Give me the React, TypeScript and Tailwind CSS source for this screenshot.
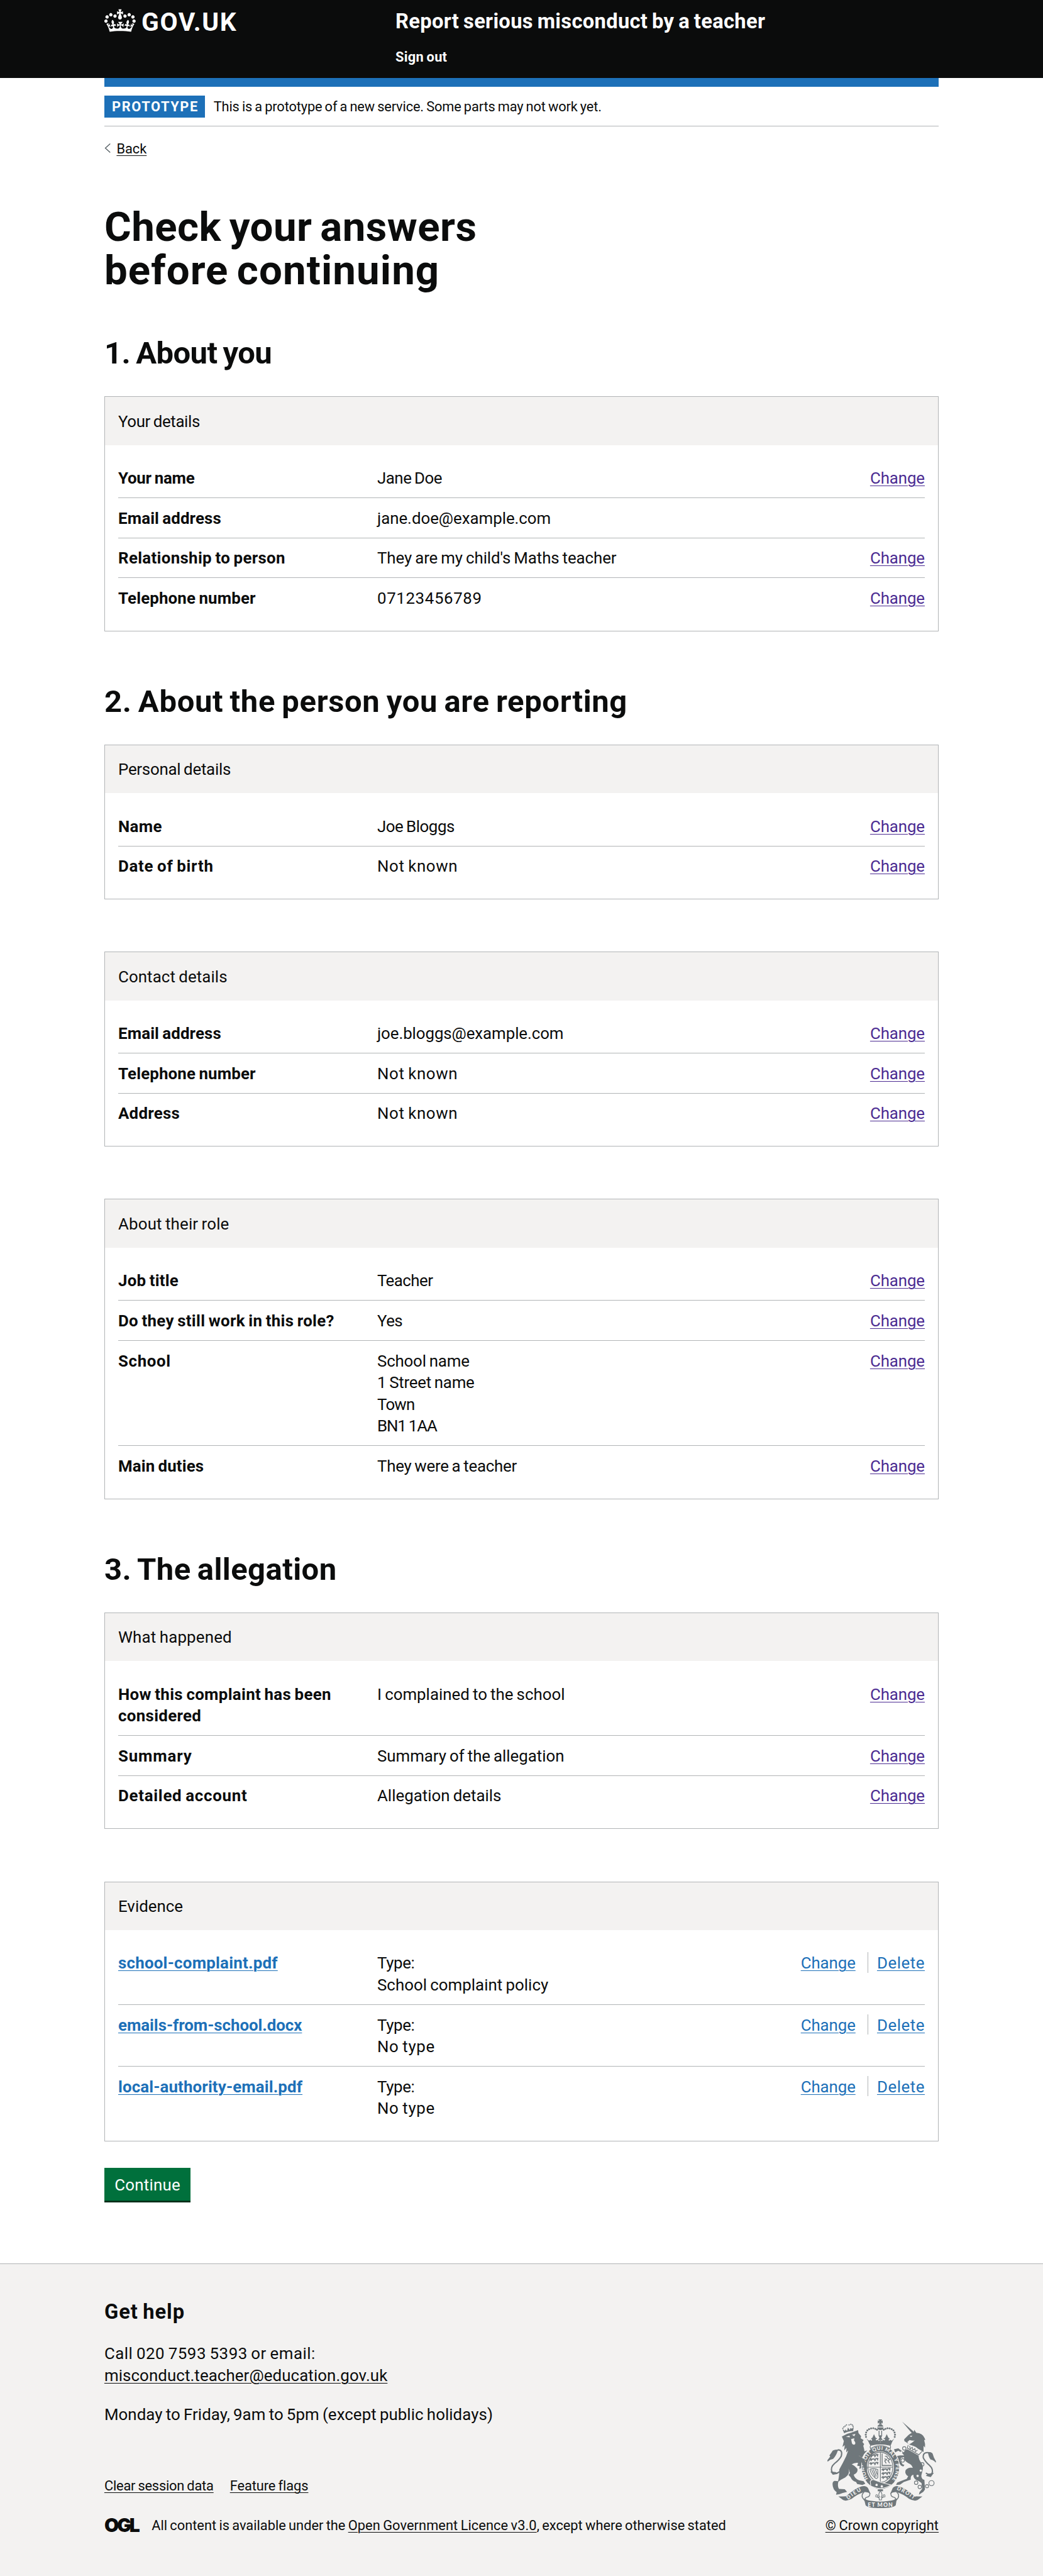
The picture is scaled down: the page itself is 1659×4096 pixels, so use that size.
import type { ReactNode } from "react";

type Tone = "visited" | "link";

type Line = { text: string; className: string };

type Row = {
  label: Line;
  href?: boolean;
  lines: Line[];
  actions: string[];
};

type CardData = { title: Line; tone: Tone; rows: Row[] };

const change = ["Change"];
const changeDelete = ["Change", "Delete"];
const notKnown: Line = { text: "Not known", className: "tracking-[0.0235em]" };
const noType: Line = { text: "No type", className: "tracking-[0.0254em]" };
const type: Line = { text: "Type:", className: "tracking-[-0.0133em]" };
const emailLabel: Line = { text: "Email address", className: "tracking-[0.0045em]" };
const phoneLabel: Line = { text: "Telephone number", className: "tracking-[0.0061em]" };

const yourDetails: CardData = {
  title: { text: "Your details", className: "tracking-[-0.0142em]" },
  tone: "visited",
  rows: [
    { label: { text: "Your name", className: "tracking-[-0.0094em]" }, lines: [{ text: "Jane Doe", className: "tracking-[-0.019em]" }], actions: change },
    { label: emailLabel, lines: [{ text: "jane.doe@example.com", className: "tracking-[-0.0013em]" }], actions: [] },
    {
      label: { text: "Relationship to person", className: "tracking-[0.0126em]" },
      lines: [{ text: "They are my child's Maths teacher", className: "tracking-[-0.0032em]" }],
      actions: change,
    },
    { label: phoneLabel, lines: [{ text: "07123456789", className: "tracking-[0.024em]" }], actions: change },
  ],
};

const personalDetails: CardData = {
  title: { text: "Personal details", className: "tracking-[-0.0101em]" },
  tone: "visited",
  rows: [
    { label: { text: "Name", className: "tracking-[0.0122em]" }, lines: [{ text: "Joe Bloggs", className: "tracking-[-0.0172em]" }], actions: change },
    { label: { text: "Date of birth", className: "tracking-[0.028em]" }, lines: [notKnown], actions: change },
  ],
};

const contactDetails: CardData = {
  title: { text: "Contact details", className: "tracking-[0.0034em]" },
  tone: "visited",
  rows: [
    { label: emailLabel, lines: [{ text: "joe.bloggs@example.com", className: "tracking-[-0.0031em]" }], actions: change },
    { label: phoneLabel, lines: [notKnown], actions: change },
    { label: { text: "Address", className: "tracking-[0.0096em]" }, lines: [notKnown], actions: change },
  ],
};

const roleDetails: CardData = {
  title: { text: "About their role", className: "tracking-[0.0064em]" },
  tone: "visited",
  rows: [
    { label: { text: "Job title", className: "tracking-[0.0092em]" }, lines: [{ text: "Teacher", className: "tracking-[-0.0211em]" }], actions: change },
    {
      label: { text: "Do they still work in this role?", className: "tracking-[0.012em]" },
      lines: [{ text: "Yes", className: "tracking-[-0.02em]" }],
      actions: change,
    },
    {
      label: { text: "School", className: "tracking-[0.0247em]" },
      lines: [
        { text: "School name", className: "tracking-[-0.0073em]" },
        { text: "1 Street name", className: "tracking-[-0.0095em]" },
        { text: "Town", className: "tracking-[-0.03em]" },
        { text: "BN1 1AA", className: "tracking-[-0.0426em]" },
      ],
      actions: change,
    },
    {
      label: { text: "Main duties", className: "tracking-[0.0048em]" },
      lines: [{ text: "They were a teacher", className: "tracking-[-0.0095em]" }],
      actions: change,
    },
  ],
};

const whatHappened: CardData = {
  title: { text: "What happened", className: "tracking-[0.0069em]" },
  tone: "visited",
  rows: [
    {
      label: { text: "How this complaint has been considered", className: "tracking-[0.0125em]" },
      lines: [{ text: "I complained to the school", className: "tracking-[0em]" }],
      actions: change,
    },
    {
      label: { text: "Summary", className: "tracking-[0.0327em]" },
      lines: [{ text: "Summary of the allegation", className: "tracking-[-0.0017em]" }],
      actions: change,
    },
    {
      label: { text: "Detailed account", className: "tracking-[0.028em]" },
      lines: [{ text: "Allegation details", className: "tracking-[0em]" }],
      actions: change,
    },
  ],
};

const evidence: CardData = {
  title: { text: "Evidence", className: "tracking-[0em]" },
  tone: "link",
  rows: [
    {
      label: { text: "school-complaint.pdf", className: "tracking-[0.009em]" },
      href: true,
      lines: [type, { text: "School complaint policy", className: "tracking-[0.001em]" }],
      actions: changeDelete,
    },
    { label: { text: "emails-from-school.docx", className: "tracking-[-0.0018em]" }, href: true, lines: [type, noType], actions: changeDelete },
    { label: { text: "local-authority-email.pdf", className: "tracking-[0.0048em]" }, href: true, lines: [type, noType], actions: changeDelete },
  ],
};

function Link({ className = "", children }: { className?: string; children: ReactNode }) {
  return (
    <a href="#" className={`underline decoration-1 underline-offset-[3.4px] ${className}`}>
      {children}
    </a>
  );
}

function SummaryRow({ row, tone, last }: { row: Row; tone: Tone; last: boolean }) {
  return (
    <div className={`flex pt-[14.7px] ${last ? "pb-[13px]" : "border-b border-[#b1b4b6] pb-[13.35px]"}`}>
      <dt className={`w-298 shrink-0 pr-20 font-bold ${row.label.className}`}>
        {row.href ? <Link className="text-[#1d70b8]">{row.label.text}</Link> : row.label.text}
      </dt>
      <dd className="grow">
        {row.lines.map((line) => (
          <div key={line.text} className={line.className}>
            {line.text}
          </div>
        ))}
      </dd>
      <dd className="flex shrink-0 items-start">
        {row.actions.map((action, i) => (
          <span key={action} className="flex">
            {i > 0 && <span className="mr-10 ml-14 h-[32.5px] w-px bg-[#b1b4b6]" />}
            <Link
              className={`${tone === "visited" ? "text-[#4c2c92]" : "text-[#1d70b8]"} ${
                action === "Delete" ? "tracking-[0.0205em]" : "tracking-[-0.0036em]"
              }`}
            >
              {action}
            </Link>
          </span>
        ))}
      </dd>
    </div>
  );
}

function Card({ card }: { card: CardData }) {
  return (
    <div className="border border-[#b1b4b6]">
      <h3 className={`h-[76.5px] bg-[#f3f2f1] px-[21.1px] pt-[21.6px] ${card.title.className}`}>{card.title.text}</h3>
      <dl className="px-[21.1px] pt-15 pb-[21.3px]">
        {card.rows.map((row, i) => (
          <SummaryRow key={row.label.text} row={row} tone={card.tone} last={i === card.rows.length - 1} />
        ))}
      </dl>
    </div>
  );
}

function Section({ title, titleClass, cards }: { title: string; titleClass: string; cards: CardData[] }) {
  return (
    <section>
      <h2 className={`mb-[41.6px] text-[49px] leading-40 font-bold [word-spacing:-0.05em] ${titleClass}`}>
        <span className="relative top-px">{title}</span>
      </h2>
      <div className="flex flex-col gap-[83.2px]">
        {cards.map((card) => (
          <Card key={card.title.text} card={card} />
        ))}
      </div>
    </section>
  );
}

function Crown() {
  return (
    <svg viewBox="0 0 36 32" className="h-32 w-36 fill-white" aria-hidden="true">
      <path d="M6.7 12.2c1 .4 2.1-.1 2.5-1s-.1-2.1-1-2.5c-1-.4-2.1.1-2.5 1-.4 1 0 2.1 1 2.5m-4.3 2.5c1 .4 2.1-.1 2.5-1s-.1-2.1-1-2.5c-1-.4-2.1.1-2.5 1-.5 1 0 2.1 1 2.5m-1.3 4.8c1 .4 2.1-.1 2.5-1s-.1-2.1-1-2.5c-1-.4-2.1.1-2.5 1-.4 1 0 2.1 1 2.5m10.4-5.8c1 .4 2.1-.1 2.5-1s-.1-2.1-1-2.5c-1-.4-2.1.1-2.5 1s0 2.1 1 2.5m17.8-1.5c-1 .4-2.1-.1-2.5-1s.1-2.1 1-2.5c1-.4 2.1.1 2.5 1 .5 1 0 2.1-1 2.5m4.3 2.5c-1 .4-2.1-.1-2.5-1s.1-2.1 1-2.5c1-.4 2.1.1 2.5 1 .5 1 0 2.1-1 2.5m1.3 4.8c-1 .4-2.1-.1-2.5-1s.1-2.1 1-2.5c1-.4 2.1.1 2.5 1 .4 1 0 2.1-1 2.5m-10.4-5.8c-1 .4-2.1-.1-2.5-1s.1-2.1 1-2.5c1-.4 2.1.1 2.5 1s0 2.1-1 2.5" />
      <path d="M19 8.9l2.4 1.3V6.6l-2.4.8c-.1-.1-.1-.2-.2-.2l1-3h-3.6l1 3c-.1.1-.2.1-.2.2l-2.4-.8v3.6L17 8.9c.1.1.1.2.2.2l-1.3 4c-.1.2-.1.4-.1.6 0 1.1.8 2 1.9 2.2h.6c1.1-.2 1.9-1.1 1.9-2.2 0-.2 0-.4-.1-.6l-1.3-4c.1 0 .2-.1.2-.2" />
      <path d="M18 29.1c4.6 0 8.9.3 12.8.9 1.1-4.6 2.4-7.2 3.8-9.1l-2.6-.9c.3 1.3.3 1.9 0 2.8-.4-.4-.8-1.2-1.1-2.4l-1.2 4.2c.8-.5 1.4-.9 2-.9-1.2 2.6-2.7 3.2-3.6 3-1.2-.2-1.7-1.3-1.5-2.2.3-1.3 1.6-1.6 2.2-.1 1.2-2.4-.8-3.1-2.1-2.4 1.9-1.9 2.2-3.6.6-5.7-2.2 1.7-2.2 3.3-1.2 5.6-1.3-1.5-3.3-.7-2.5 1.7.9-1.4 2.1-.5 2 .8-.2 1.2-1.7 2.1-3.7 2-2.8-.2-3-2.2-3-3.7.7-.1 1.9.5 3 2l.4-4.4c-1.1 1.2-2.2 1.4-3.3 1.4.4-1.2 2.1-3.1 2.1-3.1h-5.4s1.8 2 2.1 3.1c-1.1 0-2.2-.2-3.3-1.4l.4 4.4c1.1-1.5 2.2-2.1 3-2-.1 1.6-.2 3.5-3 3.7-1.9.2-3.5-.8-3.7-2-.2-1.3 1-2.2 1.9-.8.7-2.4-1.3-3.1-2.6-1.7 1-2.3.9-4-1.2-5.6-1.6 2.1-1.3 3.8.6 5.7-1.3-.7-3.2 0-2.1 2.4.6-1.5 1.9-1.1 2.2.1.2.9-.4 1.9-1.5 2.2-1 .2-2.4-.5-3.6-3 .6 0 1.2.3 2 .9L6 20.400c-.3 1.1-.7 1.9-1.1 2.4-.3-.8-.2-1.4 0-2.8l-2.600.9c1.400 1.900 2.700 4.500 3.800 9.100 3.900-.6 7.300-.9 11.300-.9" />
    </svg>
  );
}

/* Scroll end with its fold; the right-hand one is this shape flipped. */
function ScrollEnd() {
  return (
    <g>
      <path d="M208 652 Q235 652 262 651 Q318 598 368 582 Q400 574 414 596 Q420 612 431 634 Q408 618 385 622 Q340 634 300 668 Q262 688 240 676 Z" />
      <path d="M424 628 Q432 650 404 658 Q388 664 396 672 M385 622 Q364 640 376 662 Q388 682 402 688" fill="none" stroke="#6f777b" strokeWidth="6" />
    </g>
  );
}

function CrownArch() {
  return (
    <g>
      {[
        [399, 240],
        [397, 225],
        [400, 210],
        [408, 196],
        [420, 187],
        [434, 182],
        [449, 181],
        [463, 185],
        [475, 191],
      ].map(([x, y]) => (
        <circle key={x} cx={x} cy={y} r="6.6" />
      ))}
      <path d="M400 250 Q412 262 424 292 L498 280 L498 262 L486 270 Q480 258 472 262 Q480 246 466 248 L454 222 L442 248 Q430 246 438 262 Q424 258 420 268 Z" />
      <circle cx="436" cy="262" r="5" fill="#f3f2f1" />
      <circle cx="471" cy="260" r="5" fill="#f3f2f1" />
    </g>
  );
}

function PassantLions({ x, y }: { x: number; y: number }) {
  return (
    <g fill="none" stroke="#6f777b" strokeWidth="8">
      {[0, 27, 54].map((dy) => (
        <path key={dy} d={`M${x} ${y + dy + 8} q6 -14 14 -4 q12 -8 22 0 q10 -10 20 -6 q-6 8 2 10 M${x + 8} ${y + dy + 14} l4 -8 M${x + 34} ${y + dy + 14} l6 -8`} />
      ))}
    </g>
  );
}

function RoyalArms() {
  return (
    <svg viewBox="132 120 750 612" className="h-[141px] w-[172.800px]" fill="#6f777b" aria-hidden="true">
      <defs>
        <path id="garter" d="M414 530 A107 123 0 1 1 582 530" />
        <path id="motto-left" d="M276 676 Q328 628 380 608" />
        <path id="motto-right" d="M610 604 Q664 624 730 674" />
      </defs>

      {/* Lion */}
      <path d="M232 238 Q262 218 300 210 L344 194 L347 214 L365 236 L362 250 L382 262 L374 276 L386 290 L380 302 L386 326 L388 340 L408 334 Q384 356 372 384 L348 368 Q382 410 406 444 L410 470 L396 484 L388 466 L366 474 L372 454 L352 462 L356 442 L338 440 L344 420 Q320 416 300 430 Q318 436 340 462 Q344 490 314 502 Q322 530 350 540 L382 546 L394 564 L374 572 L338 566 L330 552 Q304 546 292 518 L278 504 L288 490 L278 460 Q290 500 256 520 Q226 534 208 550 Q200 580 212 600 L252 602 L268 620 L238 628 L214 636 L192 640 L196 622 Q170 604 168 570 Q166 548 182 544 L206 546 Q216 500 214 466 Q240 420 262 374 L276 334 L262 348 L264 316 L248 334 L252 298 L236 310 L246 270 Z" />
      <path d="M236 186 L248 216 Q276 200 310 200 L314 170 L302 184 L290 180 L288 194 L274 176 L268 200 L256 188 L254 200 Z" />
      {[
        [239, 182],
        [246, 172],
        [255, 166],
        [264, 158],
        [282, 158],
        [294, 154],
        [304, 158],
        [309, 167],
      ].map(([x, y]) => (
        <circle key={x} cx={x} cy={y} r="4.600" />
      ))}
      <path d="M260 240 L284 232 L288 244 Z M302 226 L326 220 L318 236 Z M296 256 L318 250 L316 266 Q328 276 324 290 Q312 300 302 286 Z" fill="#f3f2f1" />
      <path d="M204 330 Q240 330 228 374 Q214 400 182 424 Q150 452 164 484 Q192 506 224 474" fill="none" stroke="#6f777b" strokeWidth="9" />
      <path d="M212 328 Q166 326 164 344 L146 370 L152 376 L132 402 L134 412 Q150 396 172 392 Q192 372 204 336 Z M152 480 L170 502 L202 496 L190 484 Z" />

      {/* Unicorn */}
      <path d="M648 135 L732 208 L716 216 Z" />
      <path d="M732 192 L746 212 Q790 214 804 250 L808 262 L800 262 Q810 290 806 314 L796 302 L796 346 L782 336 Q760 326 742 310 Q722 300 696 292 Q724 280 748 250 Q734 276 700 262 L684 276 L692 288 L664 270 L662 258 L690 230 Q708 212 728 210 Z" />
      <path d="M700 234 L720 232 L710 242 Z" fill="#f3f2f1" />
      <path d="M690 296 L684 318 L764 364 L786 340 M700 302 l4 22 l14 -12 l4 20 l14 -10 l4 20 l14 -10" fill="none" stroke="#6f777b" strokeWidth="5" />
      <path d="M684 326 Q722 346 762 370 Q762 402 784 424 Q798 450 786 486 Q770 530 802 538 L806 604 L794 620 L764 640 L768 622 L786 600 L782 560 Q764 544 748 540 Q724 526 726 502 Q704 506 708 536 L660 552 L634 570 L606 572 L614 556 L640 545 L680 530 L690 512 Q664 498 672 470 Q690 448 722 454 Q714 430 690 422 Q656 400 662 380 L640 386 L636 406 L652 430 L664 434 L656 446 L640 438 L610 396 L606 374 L634 368 L662 368 L646 350 L622 336 L600 348 L592 326 L622 320 L660 348 Q664 332 684 326 Z" />
      <path d="M846 352 Q790 338 794 384 Q806 410 836 436 Q866 464 854 494 Q836 508 812 490" fill="none" stroke="#6f777b" strokeWidth="9" />
      <path d="M826 348 Q858 342 862 366 L868 384 L882 410 L880 418 Q862 398 846 398 Q832 384 826 348 Z M868 488 L846 518 L812 510 L826 496 Z" />
      <g fill="none" stroke="#6f777b" strokeWidth="5">
        <circle cx="663" cy="320" r="12" />
        <circle cx="652" cy="403" r="12" />
        <circle cx="787" cy="430" r="12" />
        <circle cx="745" cy="557" r="12" />
        <circle cx="770" cy="586" r="12" />
        <circle cx="820" cy="581" r="11" />
        <circle cx="851" cy="560" r="18" />
      </g>
      <g fill="#f3f2f1">
        <circle cx="777" cy="473" r="8" />
        <circle cx="755" cy="510" r="8" />
        <circle cx="644" cy="346" r="7" />
      </g>

      {/* Garter and shield */}
      <ellipse cx="499" cy="452" rx="134" ry="153" fill="#f3f2f1" />
      <ellipse cx="499" cy="452" rx="129" ry="148" />
      <ellipse cx="498" cy="452" rx="94" ry="112" fill="#f3f2f1" />
      <ellipse cx="498" cy="450" rx="86" ry="104" fill="none" stroke="#6f777b" strokeWidth="5" />
      <path d="M498 346 V554 M412 450 H584" fill="none" stroke="#6f777b" strokeWidth="5" />
      <PassantLions x={424} y={366} />
      <PassantLions x={508} y={462} />
      <path d="M510 356 V438 H576 M530 376 q16 -8 16 10 l18 10 l-14 8 l12 18 M544 396 l-16 10 l10 18 M526 392 l14 4" fill="none" stroke="#6f777b" strokeWidth="6" />
      <path d="M426 464 Q450 456 480 466 L480 520 Q474 532 462 524 Q432 500 426 464 M438 468 L462 518 M450 466 L470 514 M464 466 L476 500" fill="none" stroke="#6f777b" strokeWidth="5" />
      <text className="[word-spacing:0]" fill="#f3f2f1" fontFamily="Lato" fontWeight="900" fontSize="34">
        <textPath href="#garter" textLength="530">
          HONI SOIT QUI MAL Y PENSE
        </textPath>
      </text>
      <path d="M428 548 Q440 528 462 540 Q500 556 570 572 Q510 616 432 580 Z" stroke="#f3f2f1" strokeWidth="5" />
      <circle cx="472" cy="572" r="8" fill="#f3f2f1" />
      <circle cx="508" cy="582" r="8" fill="#f3f2f1" />
      <path d="M348 368 L372 384 Q400 410 408 452 L404 476 L392 484 L384 452 Z" />

      {/* Crown */}
      <CrownArch />
      <g transform="translate(996 0) scale(-1 1)">
        <CrownArch />
      </g>
      <path d="M484 120 H510 L503 132 L514 126 V148 L503 142 L508 154 H488 L493 142 L480 148 V126 L493 132 Z" />
      <path d="M478 170 Q480 156 498 155 Q516 156 518 170 Z M476 175 H520 Q518 194 498 194 Q478 192 476 175 Z M486 198 H492 V228 H486 Z M504 198 H510 V228 H504 Z M484 230 H512 L504 246 L514 262 H482 L492 246 Z" />
      <path d="M424 288 Q498 272 574 288 L566 304 Q498 286 430 304 Z" />
      <path d="M430 322 Q420 296 446 296 Q498 284 550 296 Q576 296 566 322 Q530 300 498 302 Q464 300 430 322 Z" fill="#f3f2f1" stroke="#6f777b" strokeWidth="5" />

      {/* Scroll */}
      <ScrollEnd />
      <g transform="translate(996 0) scale(-1 1)">
        <ScrollEnd />
      </g>
      <path d="M384 664 Q400 684 498 688 Q594 684 612 664 L604 712 Q588 732 498 732 Q410 732 396 712 Z" />
      <g fill="#f3f2f1" fontFamily="Lato" fontWeight="900" fontSize="38">
        <text x="411" y="723" textLength="172">
          ET MON
        </text>
        <text fontSize="36">
          <textPath href="#motto-left" textLength="110">
            DIEU
          </textPath>
        </text>
        <text fontSize="36">
          <textPath href="#motto-right" textLength="136">
            DROIT
          </textPath>
        </text>
      </g>
      <path d="M480 603 H516 V616 H480 Z" />
      <path d="M498 614 Q516 634 504 656 Q520 660 516 644 Q532 632 530 654 Q518 654 506 664 V676 H490 V664 Q478 654 466 654 Q464 632 480 644 Q476 660 492 656 Q480 634 498 614 Z" fill="#f3f2f1" stroke="#6f777b" strokeWidth="4.500" />
    </svg>
  );
}

function Header() {
  return (
    <header className="h-90 shrink-0 bg-[#0b0c0c] text-white">
      <div className="mx-auto flex w-960">
        <div className="flex h-50 w-335 shrink-0 items-start">
          <div className="mt-[9.1px]">
            <Crown />
          </div>
          <span className="mt-[7.5px] ml-[9.3px] text-[40.800px] leading-40 font-bold tracking-[0.04em]">GOV.UK</span>
        </div>
        <div className="pt-[14.3px]">
          <a href="#" className="block text-[32.7px] leading-30 font-bold tracking-[0.0098em] [word-spacing:-0.05em]">
            Report serious misconduct by a teacher
          </a>
          <a href="#" className="mt-15 block text-[21.8px] leading-20 font-bold tracking-[0.0123em] [word-spacing:-0.05em]">
            Sign out
          </a>
        </div>
      </div>
    </header>
  );
}

function PhaseBanner() {
  return (
    <div className="mb-[0.4px] border-b border-[#b1b4b6] pb-10">
      <div className="h-10 bg-[#1d70b8]" />
      <div className="mt-10 flex items-start text-[21.8px] leading-25 [word-spacing:-0.05em]">
        <strong className="mr-10 h-25 w-[160px] bg-[#1d70b8] pl-[12.2px] tracking-[0.073em] text-white">
          <span className="relative top-px">PROTOTYPE</span>
        </strong>
        <span className="relative top-[0.600px] tracking-[-0.0064em]">This is a prototype of a new service. Some parts may not work yet.</span>
      </div>
    </div>
  );
}

function Footer() {
  return (
    <footer className="grow border-t border-[#b1b4b6] bg-[#f3f2f1] pt-[56.400px]">
      <div className="mx-auto flex w-960 items-end justify-between">
        <div>
          <h2 className="mb-20 text-[32.7px] leading-30 font-bold tracking-[0.0293em] [word-spacing:-0.05em]">Get help</h2>
          <p className="tracking-[0.0196em]">Call 020 7593 5393 or email:</p>
          <p className="mb-20 tracking-[0.0033em]">
            <Link>misconduct.teacher@education.gov.uk</Link>
          </p>
          <p className="mb-60 tracking-[0.0022em]">Monday to Friday, 9am to 5pm (except public holidays)</p>
          <div className="mb-25 flex gap-[26px] text-[21.8px] leading-20 [word-spacing:-0.05em]">
            <Link className="tracking-[-0.0085em]">Clear session data</Link>
            <Link className="tracking-[-0.0033em]">Feature flags</Link>
          </div>
          <div className="flex h-20 items-center text-[21.8px] leading-20 [word-spacing:-0.05em]">
            <span className="w-[75.3px] font-[Inter] text-[30px] font-black tracking-[-0.1em]">OGL</span>
            <span className="tracking-[0em]">
              All content is available under the <Link className="tracking-[0.0032em]">Open Government Licence v3.0</Link>, except where otherwise
              stated
            </span>
          </div>
        </div>
        <div className="flex flex-col items-end text-[21.8px] leading-20 [word-spacing:-0.05em]">
          <div className="mr-[4px] mb-[14px]">
            <RoyalArms />
          </div>
          <Link className="tracking-[0.0055em]">© Crown copyright</Link>
        </div>
      </div>
    </footer>
  );
}

export default function App() {
  return (
    <div className="flex min-h-[4096px] flex-col bg-white font-[Roboto,sans-serif] text-[25.86px] leading-25 text-[#0b0c0c] [--spacing:1.3825px] [word-spacing:-0.05em]">
      <Header />
      <div className="mx-auto w-960">
        <PhaseBanner />
        <a href="#" className="mt-15 flex items-center text-[21.8px] leading-20">
          <svg viewBox="0 0 10 15" className="mr-[9px] ml-[0.5px] h-[15px] w-[10px]" fill="none" stroke="#505a5f" strokeWidth="1.3" aria-hidden="true">
            <path d="M9.300 .5 L1.500 7.500 L9.300 14.500" />
          </svg>
          <span className="relative top-[0.5px] underline decoration-1 underline-offset-[3.4px]">Back</span>
        </a>
        <main className="pt-55 pb-70">
          <h1 className="mb-50 text-[65.4px] leading-50 font-bold [word-spacing:-0.06em]">
            <span className="tracking-[0.007em]">Check your answers</span>
            <br />
            <span className="tracking-[0.0165em]">before continuing</span>
          </h1>
          <div className="flex flex-col gap-[83.2px]">
            <Section title="1. About you" titleClass="tracking-[-0.012em]" cards={[yourDetails]} />
            <Section
              title="2. About the person you are reporting"
              titleClass="tracking-[0.013em]"
              cards={[personalDetails, contactDetails, roleDetails]}
            />
            <Section title="3. The allegation" titleClass="tracking-[0.0089em]" cards={[whatHappened, evidence]} />
          </div>
          <button className="mt-30 block h-40 w-[137.5px] bg-[#00703c] pb-[1px] text-center tracking-[0.0087em] text-white shadow-[inset_0_-2.8px_0_#002d18]">
            Continue
          </button>
        </main>
      </div>
      <Footer />
    </div>
  );
}
